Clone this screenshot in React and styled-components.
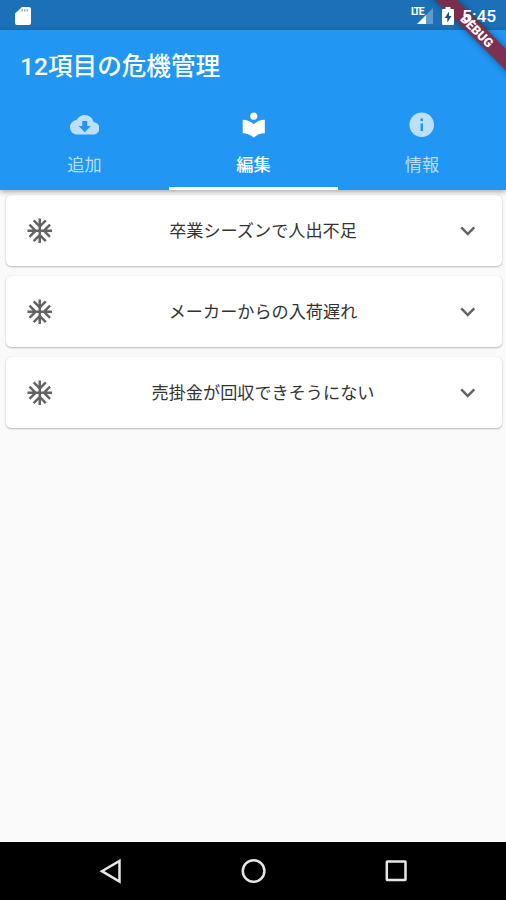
import React from "react";
import styled, { createGlobalStyle } from "styled-components";
import { MdCloudDownload, MdLocalLibrary, MdInfo, MdAcUnit, MdExpandMore } from "react-icons/md";

const GlobalStyle = createGlobalStyle`
  *, *::before, *::after { box-sizing: border-box; }
  html, body { margin: 0; padding: 0; }
  body { font-family: Roboto, "Noto Sans CJK JP", sans-serif; }
  svg { display: block; flex: none; }
`;

const Screen = styled.div`
  position: relative;
  display: flex;
  flex-direction: column;
  width: 506px;
  height: 900px;
  overflow: hidden;
  background: #fafafa;
`;

const StatusBar = styled.div`
  display: flex;
  align-items: center;
  justify-content: space-between;
  flex: none;
  height: 30px;
  padding: 1px 9px 0 15px;
  background: #1b70b7;
  color: #fff;
`;

const StatusIcons = styled.div`
  position: relative;
  z-index: 3;
  display: flex;
  align-items: center;
`;

const Clock = styled.span`
  width: 35px;
  margin-left: 8px;
  font-size: 17.4px;
  font-weight: 500;
  line-height: 28px;
  white-space: nowrap;
`;

const Header = styled.header`
  position: relative;
  z-index: 1;
  flex: none;
  height: 160px;
  background: #2196f3;
  box-shadow: 0 2px 5px rgba(0, 0, 0, 0.32);
`;

const Title = styled.h1`
  height: 69px;
  margin: 0;
  padding-left: 20px;
  color: #fff;
  font-size: 24.6px;
  font-weight: 500;
  line-height: 73px;
  white-space: nowrap;
`;

const Tabs = styled.nav`
  display: grid;
  grid-template-columns: 169px 169px 168px;
  height: 91px;
`;

const Tab = styled.div`
  display: flex;
  flex-direction: column;
  align-items: center;
  padding-top: 11px;
  border-bottom: 3px solid ${(p) => (p.$active ? "#fff" : "transparent")};
  color: ${(p) => (p.$active ? "#fff" : "rgba(255, 255, 255, 0.7)")};
`;

const TabLabel = styled.span`
  margin-top: 13.5px;
  font-size: 17.2px;
  font-weight: ${(p) => (p.$active ? 500 : 400)};
  line-height: 24px;
`;

const List = styled.main`
  display: flex;
  flex: 1;
  flex-direction: column;
  gap: 10px;
  padding: 4.8px 4px 0 6px;
`;

const Card = styled.article`
  display: flex;
  align-items: center;
  flex: none;
  height: 71.2px;
  padding: 0 20px 0 19px;
  border-radius: 5px;
  background: #fff;
  box-shadow: 0 1px 2px rgba(0, 0, 0, 0.25), 0 0 1px rgba(0, 0, 0, 0.12);
  color: #636363;
`;

const CardTitle = styled.div`
  flex: 1;
  padding: 1px 0 0 19px;
  color: #333;
  font-size: 17.15px;
  font-weight: 400;
  line-height: 24px;
  text-align: center;
`;

const NavBar = styled.footer`
  display: flex;
  align-items: center;
  justify-content: center;
  gap: 112px;
  flex: none;
  height: 58px;
  background: #000;
`;

const RibbonCorner = styled.div`
  position: absolute;
  z-index: 2;
  top: 0;
  right: 0;
  width: 90px;
  height: 90px;
  overflow: hidden;
`;

const Ribbon = styled.div`
  position: absolute;
  top: 34.5px;
  left: 20px;
  width: 140px;
  height: 14.8px;
  padding-left: 2px;
  background: rgba(131, 40, 66, 0.92);
  box-shadow: 0 0 6px rgba(0, 0, 0, 0.45);
  color: #fff;
  font-size: 12.6px;
  font-weight: 900;
  line-height: 15px;
  text-align: center;
  transform: rotate(45deg);
  transform-origin: 70px -34.5px;
`;

const SdCard = () => (
  <svg width="17" height="20" viewBox="0 0 17 20">
    <path fill="#fff" d="M7 1h7q2 0 2 2v14q0 2-2 2H2q-2 0-2-2V7.5z" />
    <path stroke="#78a6d0" strokeWidth="1.3" d="M7.2 3.2v2.4M9.7 3.2v2.4M12.2 3.2v2.4" />
  </svg>
);

const LteText = styled.span`
  align-self: flex-start;
  width: 14px;
  margin-right: -9px;
  padding-top: 4px;
  font-size: 10.4px;
  font-weight: 700;
  letter-spacing: -1.6px;
  line-height: 12px;
`;

const Signal = () => (
  <svg width="18" height="18" viewBox="0 0 18 18">
    <path fill="#fff" opacity="0.3" d="M17 1v16H10V8z" />
    <path fill="#fff" d="M10 8v9H1z" />
  </svg>
);

const Battery = styled.svg`
  margin-left: 8px;
`;

const items = ["卒業シーズンで人出不足", "メーカーからの入荷遅れ", "売掛金が回収できそうにない"];

const tabs = [
  { label: "追加", Icon: MdCloudDownload },
  { label: "編集", Icon: MdLocalLibrary, active: true },
  { label: "情報", Icon: MdInfo },
];

export default function App() {
  return (
    <Screen>
      <GlobalStyle />
      <StatusBar>
        <SdCard />
        <StatusIcons>
          <LteText>LTE</LteText>
          <Signal />
          <Battery width="12" height="18" viewBox="0 0 12 18">
            <path fill="#fff" d="M3.5 0h5v2H11q1 0 1 1v14q0 1-1 1H1q-1 0-1-1V3q0-1 1-1h2.5z" />
            <path fill="#1b4f85" d="M7 4.5 2.7 11h2.6v4.5L9.5 9H7z" />
          </Battery>
          <Clock>5:45</Clock>
        </StatusIcons>
      </StatusBar>
      <Header>
        <Title>12項目の危機管理</Title>
        <Tabs>
          {tabs.map(({ label, Icon, active }) => (
            <Tab key={label} $active={active}>
              <Icon size={29.5} />
              <TabLabel $active={active}>{label}</TabLabel>
            </Tab>
          ))}
        </Tabs>
      </Header>
      <List>
        {items.map((text) => (
          <Card key={text}>
            <MdAcUnit size={29.5} />
            <CardTitle>{text}</CardTitle>
            <MdExpandMore size={29.5} />
          </Card>
        ))}
      </List>
      <NavBar>
        <svg width="30" height="30" viewBox="0 0 30 30">
          <path d="M23.5 5v20.5L6 15.2z" fill="none" stroke="#e6e6e6" strokeWidth="2.5" />
        </svg>
        <svg width="30" height="30" viewBox="0 0 30 30">
          <circle cx="15.6" cy="15" r="10.8" fill="none" stroke="#e6e6e6" strokeWidth="2.5" />
        </svg>
        <svg width="30" height="30" viewBox="0 0 30 30">
          <rect x="6.8" y="5.4" width="18.7" height="18.7" rx="0.5" fill="none" stroke="#e6e6e6" strokeWidth="2.5" />
        </svg>
      </NavBar>
      <RibbonCorner>
        <Ribbon>DEBUG</Ribbon>
      </RibbonCorner>
    </Screen>
  );
}
